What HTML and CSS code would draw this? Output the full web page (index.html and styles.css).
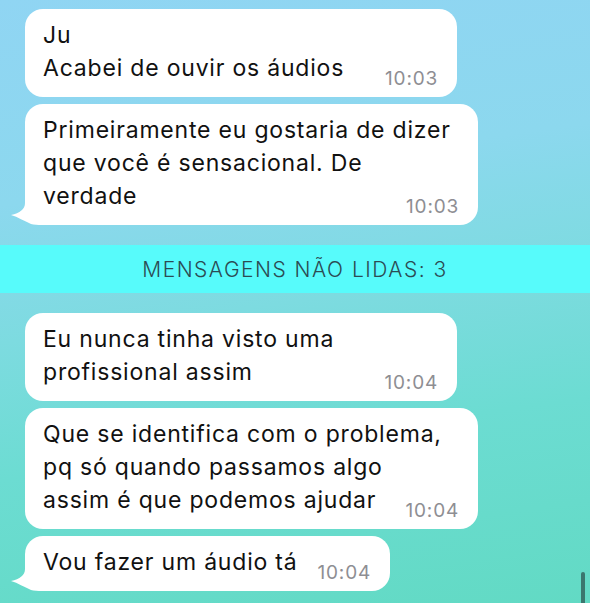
FILE: index.html
```html
<!DOCTYPE html>
<html lang="pt-BR">
<head>
    <meta charset="UTF-8">
    <meta name="viewport" content="width=device-width, initial-scale=1.0">
    <title>Conversa</title>
    <link rel="stylesheet" href="styles.css">
</head>
<body>
    <div class="chat">
        <div class="group">
            <div class="bubble w-432">
                <p>Ju</p>
                <div class="last-row">
                    <p>Acabei de ouvir os áudios</p>
                    <span class="time">10:03</span>
                </div>
            </div>
            <div class="bubble w-453 tail">
                <p>Primeiramente eu gostaria de dizer</p>
                <p>que você é sensacional. De</p>
                <div class="last-row">
                    <p>verdade</p>
                    <span class="time">10:03</span>
                </div>
                <svg class="tail-shape" width="34" height="28" viewBox="0 0 34 28">
                    <path d="M16 0 L16 6 C16 12 11 16 2 18 C9 20 15 24 22 27 Q26 28 34 28 L34 0 Z" fill="#ffffff"/>
                </svg>
            </div>
        </div>

        <div class="unread">MENSAGENS NÃO LIDAS: 3</div>

        <div class="group">
            <div class="bubble w-432">
                <p>Eu nunca tinha visto uma</p>
                <div class="last-row">
                    <p>profissional assim</p>
                    <span class="time">10:04</span>
                </div>
            </div>
            <div class="bubble w-453">
                <p>Que se identifica com o problema,</p>
                <p>pq só quando passamos algo</p>
                <div class="last-row">
                    <p>assim é que podemos ajudar</p>
                    <span class="time">10:04</span>
                </div>
            </div>
            <div class="bubble w-365 tail">
                <div class="last-row">
                    <p>Vou fazer um áudio tá</p>
                    <span class="time">10:04</span>
                </div>
                <svg class="tail-shape" width="34" height="28" viewBox="0 0 34 28">
                    <path d="M16 0 L16 6 C16 12 11 16 2 18 C9 20 15 24 22 27 Q26 28 34 28 L34 0 Z" fill="#ffffff"/>
                </svg>
            </div>
        </div>
    </div>
    <div class="scrollbar"></div>
</body>
</html>
```

FILE: styles.css
```css
*,
*::before,
*::after{
    padding: 0;
    margin: 0;
    box-sizing: border-box;
}
html,
body{
    height: 100%;
}
body{
    background: linear-gradient(172deg, #90d5f3 0%, #8cd8ee 30%, #7ddbe0 50%, #6cdcd2 70%, #62dac4 100%);
    font-family: "Inter", "Liberation Sans", sans-serif;
    overflow: hidden;
    position: relative;
}
.chat{
    padding-top: 9px;
    display: flex;
    flex-direction: column;
}
.group{
    display: flex;
    flex-direction: column;
    gap: 7px;
    padding-left: 25px;
}
.bubble{
    position: relative;
    background-color: #ffffff;
    border-radius: 18px;
    padding: 10px 19px 12px 18px;
    color: #111111;
    font-size: 23px;
    letter-spacing: 0.8px;
    line-height: 33px;
    white-space: nowrap;
}
.w-432{
    width: 432px;
}
.w-453{
    width: 453px;
}
.w-365{
    width: 365px;
}
.last-row{
    display: flex;
    justify-content: space-between;
    align-items: flex-end;
}
.time{
    font-size: 19px;
    letter-spacing: 0.8px;
    line-height: 19px;
    color: #8e8e93;
    margin-bottom: -3px;
}
.tail-shape{
    position: absolute;
    left: -16px;
    bottom: 0;
}
.unread{
    margin: 20px 0;
    height: 48px;
    background-color: #57fbfb;
    display: flex;
    align-items: center;
    justify-content: center;
    font-size: 21px;
    letter-spacing: 1.5px;
    font-weight: 300;
    color: #2c4b53;
}
.scrollbar{
    position: absolute;
    right: 5px;
    bottom: 0;
    width: 4px;
    height: 31px;
    border-radius: 2px 2px 0 0;
    background-color: #3b776e;
}
```
